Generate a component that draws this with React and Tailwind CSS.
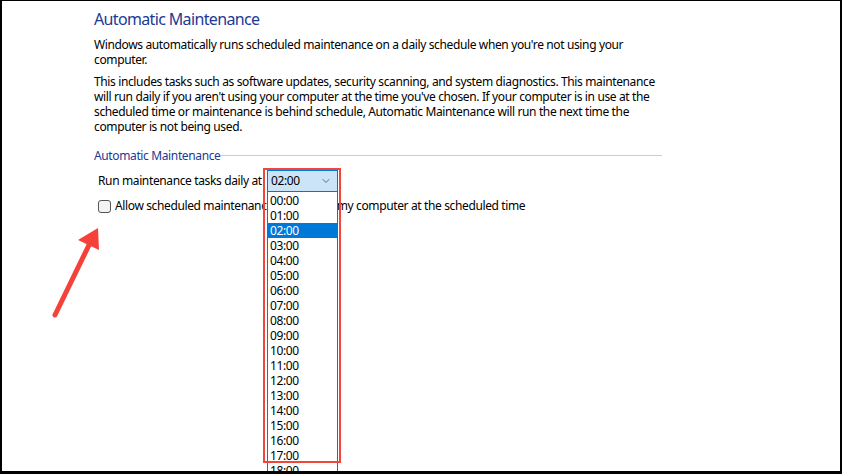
import { ChevronDown } from "lucide-react";

const hours = Array.from({ length: 24 }, (_, i) => `${String(i).padStart(2, "0")}:00`);

function TimeSelect() {
  return (
    <div className="relative w-[71px] h-[22px] border border-[#0078d7] bg-[#cce4f7] flex items-center pl-[3px] pr-[5px]">
      <span className="flex-1 leading-none">02:00</span>
      <ChevronDown size={12} strokeWidth={1.5} className="text-[#444]" />
      <ul className="absolute left-[-1px] top-[20px] w-[71px] h-[400px] border border-[#0078d7] bg-white pt-[1px] z-10">
        {hours.map((h) => (
          <li
            key={h}
            className={
              h === "02:00"
                ? "h-[15px] leading-[15px] pl-[2px] bg-[#0078d7] text-white"
                : "h-[15px] leading-[15px] pl-[2px]"
            }
          >
            {h}
          </li>
        ))}
      </ul>
    </div>
  );
}

export default function App() {
  return (
    <div className="relative w-[842px] h-[474px] overflow-hidden bg-white text-black text-[12px] tracking-[-0.37px] font-['Noto_Sans',sans-serif]">
      <div className="pl-[94px] pt-[9px]">
        <h1 className="text-[16px] leading-[20px] tracking-[-0.65px] text-[#1c3a94]">Automatic Maintenance</h1>
        <p className="mt-[8px] leading-[15px] whitespace-nowrap">
          Windows automatically runs scheduled maintenance on a daily schedule when you're not using your
          <br />
          computer.
        </p>
        <p className="mt-[7px] leading-[15px] whitespace-nowrap">
          This includes tasks such as software updates, security scanning, and system diagnostics. This maintenance
          <br />
          will run daily if you aren't using your computer at the time you've chosen. If your computer is in use at the
          <br />
          scheduled time or maintenance is behind schedule, Automatic Maintenance will run the next time the
          <br />
          computer is not being used.
        </p>

        <div className="mt-[14px] flex items-center w-[568px]">
          <span className="leading-[15px] text-[#1c3a94]">Automatic Maintenance</span>
          <div className="flex-1 h-px bg-[#c8ced6] mt-[-1px]" />
        </div>

        <div className="mt-[7px] pl-[4px] flex items-center">
          <span className="w-[169px] whitespace-nowrap">Run maintenance tasks daily at</span>
          <TimeSelect />
        </div>

        <label className="mt-[5px] pl-[4px] flex items-center gap-[4px]">
          <span className="w-[13px] h-[13px] rounded-[3px] border border-[#555] bg-[#f3f3f3]" />
          <span>Allow scheduled maintenance to wake up my computer at the scheduled time</span>
        </label>
      </div>

      {/* annotation: red highlight box */}
      <div className="absolute left-[263px] top-[168px] w-[78px] h-[295px] border-2 border-[#f2463b] z-20 pointer-events-none" />

      {/* annotation: red arrow */}
      <svg className="absolute left-0 top-0 z-20 pointer-events-none" width="842" height="474" viewBox="0 0 842 474">
        <line x1="55" y1="315" x2="89" y2="245" stroke="#f4423a" strokeWidth="5" strokeLinecap="round" />
        <polygon points="98,228 99,250 78,240" fill="#f4423a" />
      </svg>

      {/* screenshot frame */}
      <div className="absolute inset-0 border-black border-l-2 border-r-2 border-t border-b-[3px] z-30 pointer-events-none" />
    </div>
  );
}
